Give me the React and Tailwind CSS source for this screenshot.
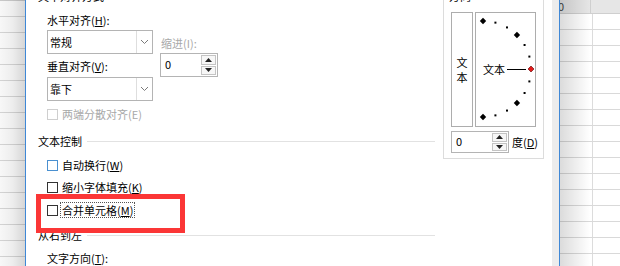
import React from "react";

const FONT = "font-['Noto_Sans_CJK_SC','Microsoft_YaHei',sans-serif]";

function U({ children }) {
  return <span className="underline underline-offset-[1px]">{children}</span>;
}

function Chevron() {
  return (
    <svg width="9" height="6" viewBox="0 0 9 6">
      <path d="M1 1 L4.5 4.5 L8 1" fill="none" stroke="#7a7a7a" strokeWidth="1" />
    </svg>
  );
}

function Select({ text, className = "" }) {
  return (
    <div className={`h-[24px] w-[106px] flex border border-[#b4b4b4] bg-white ${className}`}>
      <div className="flex-1 pl-[2px] leading-[22px] text-[11px] text-black">{text}</div>
      <div className="w-[16px] border-l border-[#dedede] flex items-center justify-center">
        <Chevron />
      </div>
    </div>
  );
}

function Tri({ up }) {
  return (
    <svg width="7" height="4" viewBox="0 0 7 4">
      {up ? <path d="M0 4 L3.5 0 L7 4 Z" fill="#222" /> : <path d="M0 0 L3.5 4 L7 0 Z" fill="#222" />}
    </svg>
  );
}

function Spin({ h, className = "" }) {
  return (
    <div className={`w-[58px] flex border border-[#b4b4b4] bg-white ${className}`} style={{ height: h }}>
      <div className="flex-1 pl-[4px] text-[11px] text-black" style={{ lineHeight: `${h - 4}px` }}>0</div>
      <div className="w-[15px] my-[1px] mr-[1px] flex flex-col gap-[1px]">
        <div className="flex-1 border border-[#c4c4c4] bg-[#f7f7f7] flex items-center justify-center"><Tri up /></div>
        <div className="flex-1 border border-[#c4c4c4] bg-[#f7f7f7] flex items-center justify-center"><Tri /></div>
      </div>
    </div>
  );
}

function Check({ children, className = "", disabled, blue, focus }) {
  const box = disabled ? "border-[#cfcfcf]" : blue ? "border-[#4a90d0]" : "border-[#333333]";
  return (
    <div className={`h-[16px] flex items-center pl-[21px] ${className}`}>
      <div className={`w-[11px] h-[11px] border ${box} bg-white`} />
      <span
        className={`ml-[2px] px-[1px] leading-[14px] border ${focus ? "border-dotted border-[#555]" : "border-transparent"} ${disabled ? "text-[#a8a8a8]" : "text-black"}`}
      >
        {children}
      </span>
    </div>
  );
}

function SheetRows({ right }) {
  const rows = Array.from({ length: 16 });
  return (
    <div className="flex flex-col">
      <div className={`h-[${right ? 15 : 14}px] bg-[#e6e6e6] border-b border-[#cfcfcf] flex`}>
        {right ? (
          <>
            <div className="w-[33px] border-r border-[#cfcfcf] text-[11px] leading-[13px] text-[#444] pl-[0px] -ml-[2px]">0</div>
            <div className="flex-1" />
          </>
        ) : null}
      </div>
      {rows.map((_, i) => (
        <div key={i} className="h-[16px] border-b border-[#d9d9d9] flex">
          {right ? (
            <>
              <div className="w-[33px] border-r border-[#dcdcdc]" />
              <div className="flex-1" />
            </>
          ) : null}
        </div>
      ))}
    </div>
  );
}

function Dial() {
  const cx = 7;
  const cy = 56;
  const r = 48;
  const pts = [];
  for (let a = -90; a <= 90; a += 15) {
    const t = (a * Math.PI) / 180;
    pts.push({ a, x: cx + r * Math.cos(t), y: cy - r * Math.sin(t) });
  }
  return (
    <svg width="59" height="113" viewBox="0 0 59 113" className="block">
      {pts.map((p) => {
        if (p.a === 0) {
          return (
            <polygon
              key={p.a}
              points={`${p.x},${p.y - 3} ${p.x + 3},${p.y} ${p.x},${p.y + 3} ${p.x - 3},${p.y}`}
              fill="#e31b1b"
              stroke="#5a0000"
              strokeWidth="0.6"
            />
          );
        }
        if (Math.abs(p.a) % 45 === 0) {
          return (
            <polygon
              key={p.a}
              points={`${p.x},${p.y - 3.2} ${p.x + 3.2},${p.y} ${p.x},${p.y + 3.2} ${p.x - 3.2},${p.y}`}
              fill="#000"
            />
          );
        }
        return <rect key={p.a} x={p.x - 1} y={p.y - 1} width="2" height="2" fill="#000" />;
      })}
      <text x="7" y="60.5" fontSize="11" fill="#000" fontFamily="'Noto Sans CJK SC', sans-serif">文本</text>
      <line x1="31" y1="56.5" x2="50" y2="56.5" stroke="#000" strokeWidth="1" />
    </svg>
  );
}

export default function App() {
  return (
    <div className={`w-[620px] h-[266px] overflow-hidden flex bg-white text-[11px] ${FONT}`}>
      {/* left spreadsheet strip */}
      <div className="relative w-[25px] h-full overflow-hidden bg-white">
        <SheetRows />
        <div className="absolute inset-0 bg-linear-to-r from-black/[0.03] via-black/[0.07] to-black/[0.16]" />
      </div>
      <div className="w-px h-full bg-[#3f88d6]" />

      {/* dialog page */}
      <div className="relative w-[526px] h-full bg-white">
        <div className="flex">
          {/* left column */}
          <div className="w-[409px] flex flex-col">
            <div className="mt-[-12px] h-[16px] leading-[16px] pl-[12px] text-black">文本对齐方式</div>
            <div className="mt-[8px] flex pl-[21px]">
              <div className="w-[106px] flex flex-col">
                <div className="h-[16px] leading-[16px] text-black">水平对齐(<U>H</U>):</div>
                <Select text="常规" className="mt-[2px]" />
                <div className="mt-[4px] h-[16px] leading-[16px] text-black">垂直对齐(<U>V</U>):</div>
                <Select text="靠下" className="mt-[3px]" />
              </div>
              <div className="ml-[7px] pt-[23px] flex flex-col">
                <div className="h-[16px] leading-[16px] pl-[1px] text-[#a8a8a8]">缩进(I):</div>
                <Spin h={24} className="mt-[2px]" />
              </div>
            </div>
            <Check disabled className="mt-[5px]">两端分散对齐(E)</Check>

            <div className="mt-[11px] h-[16px] flex items-center pl-[12px]">
              <span className="leading-[16px] text-black">文本控制</span>
              <div className="ml-[5px] flex-1 h-px bg-[#e2e2e2]" />
            </div>
            <Check blue className="mt-[8px]">自动换行(<U>W</U>)</Check>
            <Check className="mt-[6px]">缩小字体填充(<U>K</U>)</Check>
            <Check focus className="mt-[7px]">合并单元格(<U>M</U>)</Check>

            <div className="mt-[9px] h-[16px] flex items-center pl-[12px]">
              <span className="leading-[16px] text-black">从右到左</span>
              <div className="ml-[5px] flex-1 h-px bg-[#e2e2e2]" />
            </div>
            <div className="mt-[7px] h-[16px] leading-[16px] pl-[21px] text-black">文字方向(<U>T</U>):</div>
          </div>

          {/* orientation group */}
          <div className="relative ml-[8px] mt-[-4px] w-[101px] h-[163px] border border-[#dcdcdc] pl-[7px] pt-[15px]">
            <span className="absolute top-[-9px] left-[4px] bg-white px-[1px] leading-[16px] text-black">方向</span>
            <div className="flex gap-[2px]">
              <div className="w-[22px] h-[115px] border border-[#adadad] flex flex-col items-center justify-center leading-[15px] text-black">
                <span>文</span>
                <span>本</span>
              </div>
              <div className="w-[61px] h-[115px] border border-[#adadad] bg-white">
                <Dial />
              </div>
            </div>
            <div className="mt-[4px] flex items-center">
              <Spin h={22} />
              <span className="ml-[3px] text-black leading-[16px]">度(<U>D</U>)</span>
            </div>
          </div>
        </div>

        {/* red highlight annotation */}
        <div className="absolute left-[10px] top-[194px] w-[149px] h-[39px] border-[5px] border-[#fb3636]" />
      </div>

      <div className="w-[7px] h-full bg-[#ececec]" />
      <div className="w-px h-full bg-[#3f88d6]" />

      {/* right spreadsheet strip */}
      <div className="relative flex-1 h-full overflow-hidden bg-white">
        <SheetRows right />
        <div className="absolute inset-y-0 left-0 w-[30px] bg-linear-to-r from-black/[0.14] to-black/0" />
      </div>
    </div>
  );
}
